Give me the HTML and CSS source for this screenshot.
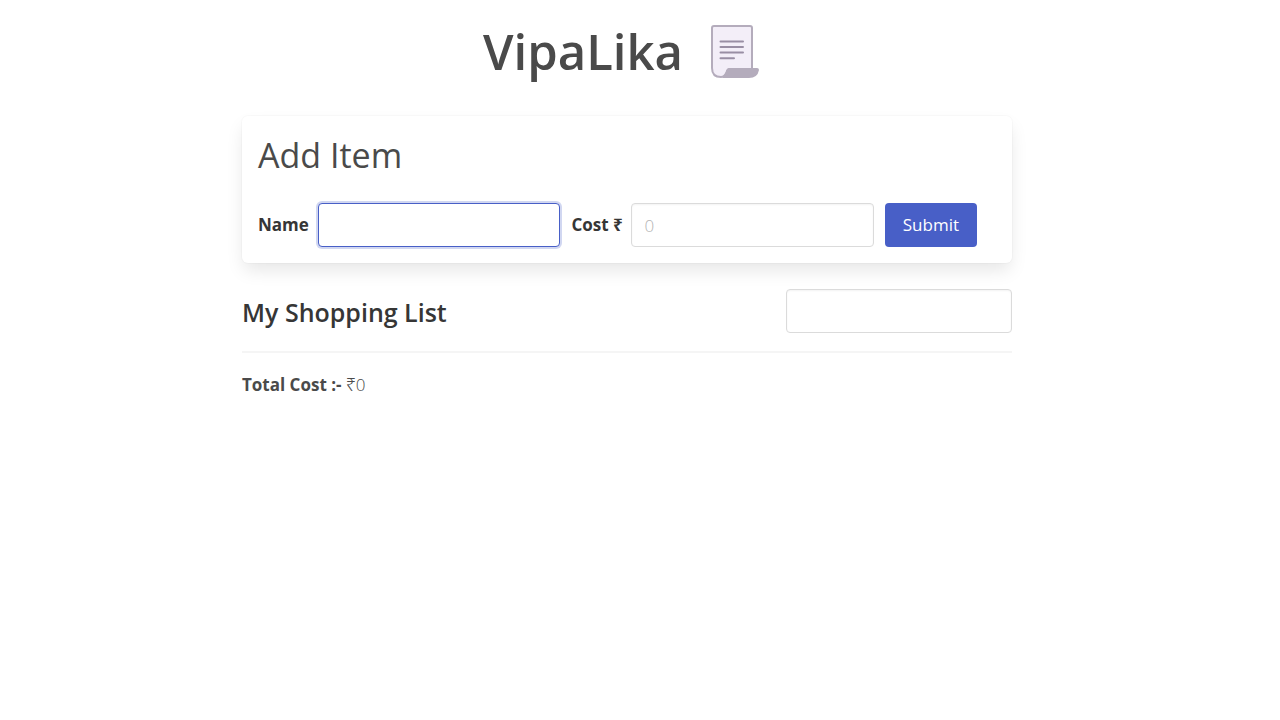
FILE: index.html
```html
<!DOCTYPE html>
<html lang="en">
<head>
<meta charset="utf-8">
<meta name="viewport" content="width=device-width, initial-scale=1">
<title>VipaLika</title>
<link rel="stylesheet" href="styles.css">
</head>
<body>
<main class="page">
  <header class="header">
    <h1 class="brand">VipaLika</h1>
    <svg class="scroll-icon" viewBox="0 0 48 54" aria-hidden="true">
      <path d="M1 4Q1 2 3 2H39Q41 2 41 4V45H18Q16.500 45 15.500 48Q13.500 53 10 53Q1 53 1 44Z" fill="#f3eef8" stroke="#b4acbc" stroke-width="2"/>
      <path d="M10 54Q14 53 15.500 47Q16.300 44 18.500 44H46Q48 44 48 46Q46.500 54 38 54Z" fill="#b4acbc"/>
      <path d="M9.500 17.500H32M9.500 23H32M9.500 28.500H32M9.500 34.200H23" fill="none" stroke="#998ea4" stroke-width="2" stroke-linecap="round"/>
    </svg>
  </header>
  <section class="card">
    <h2 class="card-title">Add Item</h2>
    <form class="item-form">
      <label class="label" for="name">Name</label>
      <input class="input focused" id="name" type="text">
      <label class="label" for="cost">Cost ₹</label>
      <input class="input" id="cost" type="text" inputmode="numeric" placeholder="0">
      <button class="button" type="submit">Submit</button>
    </form>
  </section>
  <section class="list-head">
    <h2 class="list-title">My Shopping List</h2>
    <input class="input search" type="search" aria-label="Search items">
  </section>
  <hr class="rule">
  <p class="total"><strong>Total Cost :-</strong> <span class="amount">₹0</span></p>
</main>
</body>
</html>
```
FILE: styles.css
```css
* {
  box-sizing: border-box;
}

body {
  margin: 0;
  padding: 0 26px 0 0;
  background: #fff;
  color: #4a4a4a;
  font-family: "Segoe UI", "Open Sans", "Noto Sans", sans-serif;
  font-size: 17px;
  line-height: 24px;
}

h1, h2, p {
  margin: 0;
}

.page {
  max-width: 770px;
  margin: 0 auto;
}

.header {
  display: flex;
  align-items: center;
  justify-content: center;
  gap: 28px;
  padding: 12px 12px 0 0;
}

.brand {
  font-size: 49px;
  font-weight: 600;
  line-height: 78px;
}

.scroll-icon {
  width: 48px;
  height: 54px;
}

.card {
  margin-top: 26px;
  padding: 16px;
  border-radius: 6px;
  background: #fff;
  box-shadow: 0 9px 18px -2px rgba(10, 10, 10, 0.1), 0 0 0 1px rgba(10, 10, 10, 0.02);
}

.card-title {
  margin-bottom: 25px;
  font-size: 34px;
  font-weight: 400;
  line-height: 46px;
}

.item-form {
  display: flex;
  align-items: center;
  padding-right: 19px;
}

.label {
  flex: none;
  width: 60px;
  color: #363636;
  font-weight: 700;
  white-space: nowrap;
}

.input {
  flex: 1;
  min-width: 0;
  height: 44px;
  margin: 0 11px 0 0;
  padding: 0 12px;
  border: 1px solid #dbdbdb;
  border-radius: 4px;
  outline: none;
  background: #fff;
  box-shadow: inset 0 1px 2px rgba(10, 10, 10, 0.05);
  color: #363636;
  font-family: inherit;
  font-size: 17px;
  font-weight: 300;
}

.input::placeholder {
  color: #b4b4b4;
}

.input.focused,
.input:focus {
  border-color: #485fc7;
  box-shadow: 0 0 0 2px rgba(72, 95, 199, 0.25);
}

.button {
  flex: none;
  height: 44px;
  padding: 0 18px 2px;
  border: 0;
  border-radius: 4px;
  background: #485fc7;
  color: #fff;
  font-family: inherit;
  font-size: 17px;
  cursor: pointer;
}

.list-head {
  display: flex;
  align-items: center;
  justify-content: space-between;
  padding: 26px 0 18px;
}

.list-title {
  padding-top: 2px;
  color: #363636;
  font-size: 25px;
  font-weight: 600;
  line-height: 36px;
}

.search {
  flex: 0 1 226px;
  margin: 0;
}

.rule {
  height: 2px;
  margin: 0 0 20px;
  border: 0;
  background: #f5f5f5;
}

.amount {
  font-weight: 300;
}
```
